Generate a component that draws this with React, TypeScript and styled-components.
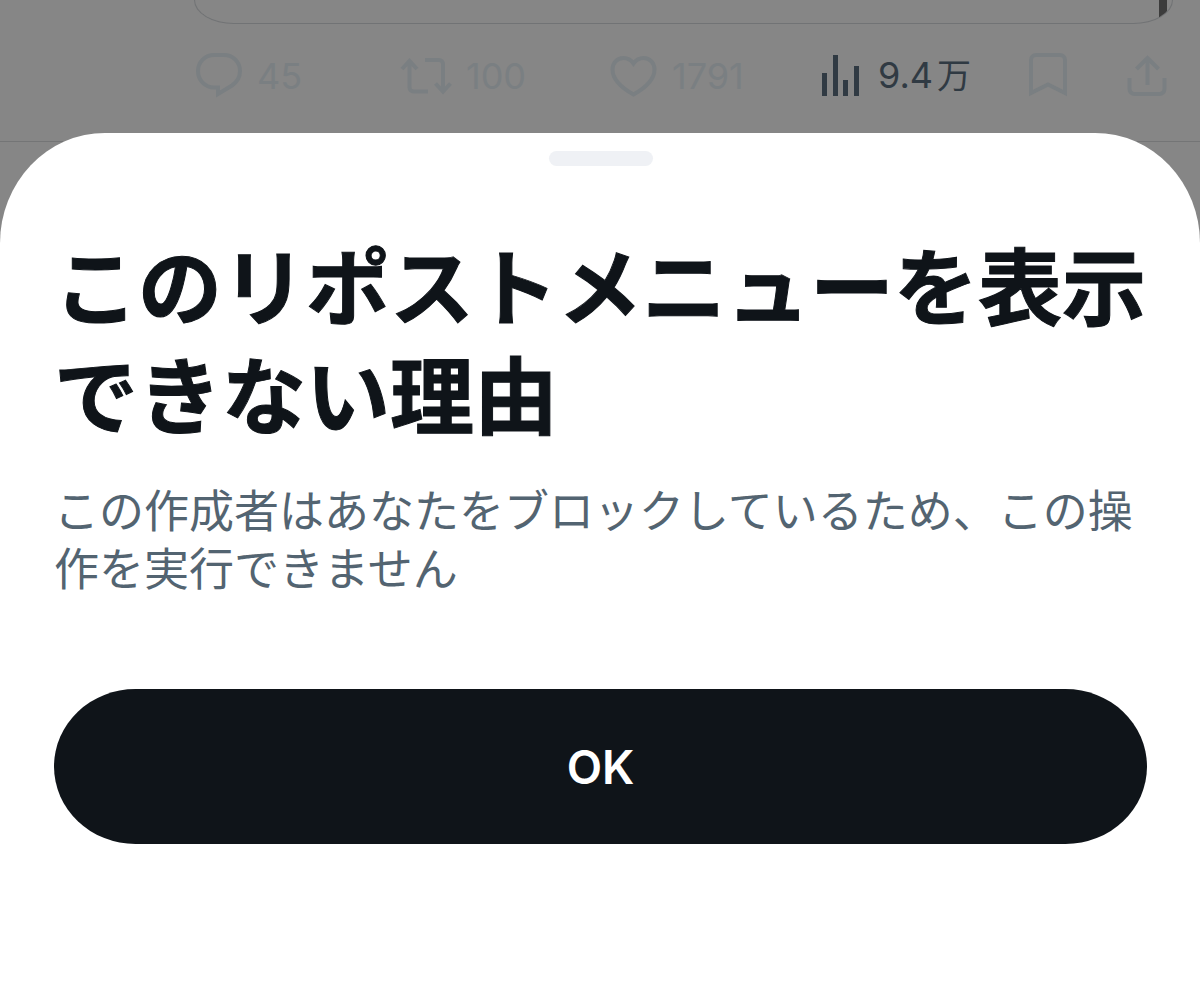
import React from 'react';
import styled, { createGlobalStyle } from 'styled-components';

const GlobalStyle = createGlobalStyle`
  *, *::before, *::after { box-sizing: border-box; }
  body {
    margin: 0;
    background: #868686;
    font-family: Inter, "Noto Sans CJK JP", sans-serif;
  }
`;

const Screen = styled.div`
  display: flex;
  flex-direction: column;
  min-height: 100vh;
`;

const Post = styled.article`
  border-bottom: 1px solid #747576;
`;

const QuoteCard = styled.div`
  display: flex;
  justify-content: flex-end;
  height: 24px;
  margin: 0 27px 0 194px;
  padding-right: 5px;
  border: 1px solid #717375;
  border-top: 0;
  border-radius: 0 0 40px 40px / 0 0 24px 24px;
  overflow: hidden;
`;

const MediaEdge = styled.div`
  width: 8px;
  height: 100%;
  background: #3c3c3c;
`;

const Actions = styled.div`
  display: grid;
  grid-template-columns: 205fr 210fr 210fr 208fr 98px 42px;
  align-items: center;
  padding: 28px 32px 42px 195px;
`;

const Action = styled.button<{ $active?: boolean }>`
  display: flex;
  align-items: center;
  gap: 14px;
  height: 47px;
  padding: 0;
  border: 0;
  background: none;
  color: ${(p) => (p.$active ? '#303a43' : '#7a7f82')};
  font: 400 36px/48px Inter, "Noto Sans CJK JP", sans-serif;
  white-space: nowrap;
  cursor: pointer;

  svg {
    flex: none;
    fill: none;
    stroke: currentColor;
    stroke-width: 4;
  }
`;

const Unit = styled.span`
  margin-left: 4px;
  font-size: 34px;
`;

const Sheet = styled.section`
  position: relative;
  display: flex;
  flex: 1;
  flex-direction: column;
  margin-top: -9px;
  padding: 18px 53px 64px 54px;
  border-radius: 105px 105px 0 0 / 110px 110px 0 0;
  background: #fff;
`;

const Handle = styled.div`
  align-self: center;
  width: 104px;
  height: 15px;
  border-radius: 8px;
  background: #eff1f5;
`;

const Title = styled.h1`
  margin: 62px 0 0;
  color: #0f1419;
  font-size: 84px;
  font-weight: 700;
  line-height: 109px;
  font-family: "Noto Sans CJK JP", sans-serif;
  word-break: break-all;
  -webkit-text-stroke: 1px currentColor;
`;

const Message = styled.p`
  margin: 34px 0 0;
  color: #536471;
  font-size: 45px;
  line-height: 58px;
  font-family: "Noto Sans CJK JP", sans-serif;
`;

const Confirm = styled.button`
  height: 155px;
  margin-top: 93px;
  border: 0;
  border-radius: 82px / 78px;
  background: #0f1419;
  color: #fff;
  font: 600 46px/56px Inter, sans-serif;
  cursor: pointer;
`;

const ReplyIcon = () => (
  <svg width="48" height="48" viewBox="0 0 48 48" aria-hidden="true">
    <path d="M19 3h10c9 0 16 7 16 16 0 6-3 11-8 14.500L23 42v-6.500h-4C10 35.500 3 28 3 19S10 3 19 3z" />
  </svg>
);

const RepostIcon = () => (
  <svg width="52" height="48" viewBox="0 0 52 48" aria-hidden="true">
    <path d="M2 17l7.500-8 7.500 8M9.500 9v26.500a4 4 0 0 0 4 4H28M25 8h14a4 4 0 0 1 4 4v27M35.500 31.500l7.500 8 7.500-8" />
  </svg>
);

const LikeIcon = () => (
  <svg width="48" height="48" viewBox="0 0 48 48" aria-hidden="true">
    <path d="M23.500 11.500C21 8 17.500 6 13.500 6 7 6 2.500 11 2.500 17.500 2.500 28 11 35.500 23.500 42.500 36 35.500 44.500 28 44.500 17.500 44.500 11 40 6 33.500 6c-4 0-7.500 2-10 5.500z" />
  </svg>
);

const ViewsIcon = () => (
  <svg width="44" height="48" viewBox="0 0 44 48" aria-hidden="true">
    <path strokeWidth="5" d="M4.500 21v23M15.500 3v41M25.500 28v16M36.500 14v30" />
  </svg>
);

const BookmarkIcon = () => (
  <svg width="42" height="48" viewBox="0 0 42 48" aria-hidden="true">
    <path d="M3 41V8a5 5 0 0 1 5-5h24a5 5 0 0 1 5 5v33l-17-8.500z" />
  </svg>
);

const ShareIcon = () => (
  <svg width="42" height="48" viewBox="0 0 42 48" aria-hidden="true">
    <path d="M21.500 33V6M10.500 17l11-11 11 11M3.500 26v11a5 5 0 0 0 5 5h25a5 5 0 0 0 5-5V26" />
  </svg>
);

export default function App() {
  return (
    <>
      <GlobalStyle />
      <Screen>
        <Post>
          <QuoteCard>
            <MediaEdge />
          </QuoteCard>
          <Actions>
            <Action><ReplyIcon />45</Action>
            <Action><RepostIcon />100</Action>
            <Action><LikeIcon />1791</Action>
            <Action $active>
              <ViewsIcon />
              <span>9.4<Unit>万</Unit></span>
            </Action>
            <Action aria-label="ブックマーク"><BookmarkIcon /></Action>
            <Action aria-label="共有"><ShareIcon /></Action>
          </Actions>
        </Post>
        <Sheet role="dialog" aria-labelledby="sheet-title">
          <Handle />
          <Title id="sheet-title">このリポストメニューを表示できない理由</Title>
          <Message>この作成者はあなたをブロックしているため、この操作を実行できません</Message>
          <Confirm>OK</Confirm>
        </Sheet>
      </Screen>
    </>
  );
}
